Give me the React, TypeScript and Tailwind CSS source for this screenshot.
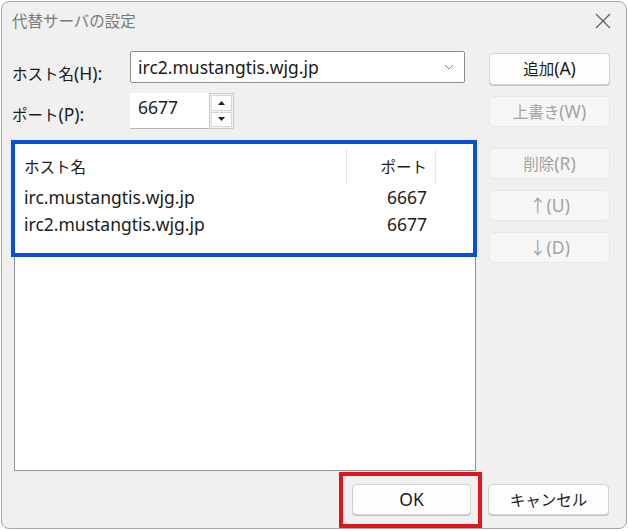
import { ReactNode } from "react";

const font = { fontFamily: '"Noto Sans", "Noto Sans CJK JP", sans-serif' };

// Yu Gothic UI draws kana small and latin large; mimic that by sizing runs separately
function Mixed({ text }: { text: string }) {
  const parts = text.split(/([\u3000-\u9fff\uff00-\uffef]+)/).filter((p) => p !== "");
  return (
    <>
      {parts.map((p, i) =>
        /[\u3000-\u9fff\uff00-\uffef]/.test(p) ? (
          <span key={i} className="text-[15.5px] leading-none" style={{ fontFamily: '"Noto Sans CJK JP", sans-serif' }}>
            {p}
          </span>
        ) : (
          <span key={i} className="text-[17.5px] leading-none">
            {p}
          </span>
        )
      )}
    </>
  );
}

function DlgButton({ children, disabled, className = "" }: { children: string; disabled?: boolean; className?: string }) {
  return (
    <div
      className={
        "flex items-center justify-center rounded-[4px] border " +
        (disabled
          ? "border-[#e8e8e8] bg-[#f6f6f6] text-[#a3a3a3]"
          : "border-[#d2d2d2] bg-[#fdfdfd] text-[#1b1b1b] shadow-[0_1px_0_#c4c4c4]") +
        " " +
        className
      }
    >
      <Mixed text={children} />
    </div>
  );
}

const servers = [
  { host: "irc.mustangtis.wjg.jp", port: 6667 },
  { host: "irc2.mustangtis.wjg.jp", port: 6677 },
];

export default function App() {
  return (
    <div className="relative w-[628px] h-[531px] bg-white overflow-hidden" style={font}>
      <div className="ml-[1px] mt-[1px] w-[626px] h-[528px] rounded-[8px] border border-[#a6a6a6] bg-[#f0f0f0] flex flex-col">
        {/* title bar */}
        <div className="h-[37px] flex items-center justify-between pl-[10px] pr-[15px]">
          <span className="text-[15.5px] text-[#7a7a7a]" style={{ fontFamily: '"Noto Sans CJK JP", sans-serif' }}>代替サーバの設定</span>
          <svg width="16" height="16" viewBox="0 0 16 16" className="text-[#5a5a5a]">
            <path d="M1 1 L15 15 M15 1 L1 15" stroke="currentColor" strokeWidth="1.1" fill="none" />
          </svg>
        </div>

        <div className="flex mt-[12px] pl-[10px]">
          {/* left column */}
          <div className="w-[466px] flex flex-col">
            <div className="h-[32px] flex items-center">
              <span className="w-[118px] text-[#1b1b1b] pt-[14px] flex items-center">
                <Mixed text="ホスト名(H):" />
              </span>
              <div className="w-[335px] h-[32px] bg-white border border-[#8d8d8d] rounded-[2px] flex items-center justify-between pl-[7px] pr-[10px]">
                <span className="text-[17.5px] text-[#1b1b1b]">irc2.mustangtis.wjg.jp</span>
                <svg width="10" height="6" viewBox="0 0 10 6">
                  <path d="M1 1 L5 5 L9 1" stroke="#8a8a8a" strokeWidth="1" fill="none" />
                </svg>
              </div>
            </div>

            <div className="h-[36px] mt-[10px] flex items-center">
              <span className="w-[118px] text-[#1b1b1b] pt-[8px] flex items-center">
                <Mixed text="ポート(P):" />
              </span>
              <div className="w-[79px] h-[36px] bg-white border-b border-[#b8b8b8] flex items-center pl-[8px] pb-[6px]">
                <span className="text-[17.5px] text-[#1b1b1b]">6677</span>
              </div>
              <div className="w-[25px] h-[36px] flex flex-col gap-[1px] p-[1px] border border-[#c8c8c8] bg-[#f4f4f4]">
                <div className="flex-1 flex items-center justify-center bg-white border border-[#d6d6d6]">
                  <svg width="7" height="4" viewBox="0 0 7 4"><path d="M0 4 L3.5 0 L7 4 Z" fill="#222" /></svg>
                </div>
                <div className="flex-1 flex items-center justify-center bg-white border border-[#d6d6d6]">
                  <svg width="7" height="4" viewBox="0 0 7 4"><path d="M0 0 L3.5 4 L7 0 Z" fill="#222" /></svg>
                </div>
              </div>
            </div>

            {/* list view */}
            <div className="ml-[2px] mt-[12px] w-[462px] h-[330px] bg-white border border-[#8f949c] pt-[7px]">
              <div className="h-[35px] flex text-[#1b1b1b]">
                <div className="w-[332px] border-r border-[#e6e6e6] pl-[9px] flex items-center">
                  <Mixed text="ホスト名" />
                </div>
                <div className="w-[89px] border-r border-[#e6e6e6] pr-[8px] flex items-center justify-end">
                  <Mixed text="ポート" />
                </div>
              </div>
              <div className="flex flex-col">
                {servers.map((s) => (
                  <div key={s.host} className="h-[27px] flex items-center text-[17.5px] text-[#1b1b1b]">
                    <div className="w-[332px] pl-[9px]">{s.host}</div>
                    <div className="w-[89px] pr-[9px] text-right">{s.port}</div>
                  </div>
                ))}
              </div>
            </div>
          </div>

          {/* right column */}
          <div className="ml-[11px] w-[121px] flex flex-col pt-[2px]">
            <DlgButton className="h-[32px]">追加(A)</DlgButton>
            <DlgButton disabled className="h-[31px] mt-[11px]">上書き(W)</DlgButton>
            <DlgButton disabled className="h-[31px] mt-[21px]">削除(R)</DlgButton>
            <DlgButton disabled className="h-[31px] mt-[11px]">↑(U)</DlgButton>
            <DlgButton disabled className="h-[31px] mt-[11px]">↓(D)</DlgButton>
          </div>
        </div>

        {/* bottom buttons */}
        <div className="flex justify-end gap-[17px] pr-[17px] mt-[13px]">
          <DlgButton className="w-[119px] h-[31px]">OK</DlgButton>
          <DlgButton className="w-[121px] h-[31px]">キャンセル</DlgButton>
        </div>
      </div>

      {/* annotation overlays */}
      <div className="absolute left-[11px] top-[140px] w-[466px] h-[117px] border-[4px] border-[#0a4fdc]" />
      <div className="absolute left-[339px] top-[472px] w-[143px] h-[56px] border-[4px] border-[#e0161c]" />
    </div>
  );
}
